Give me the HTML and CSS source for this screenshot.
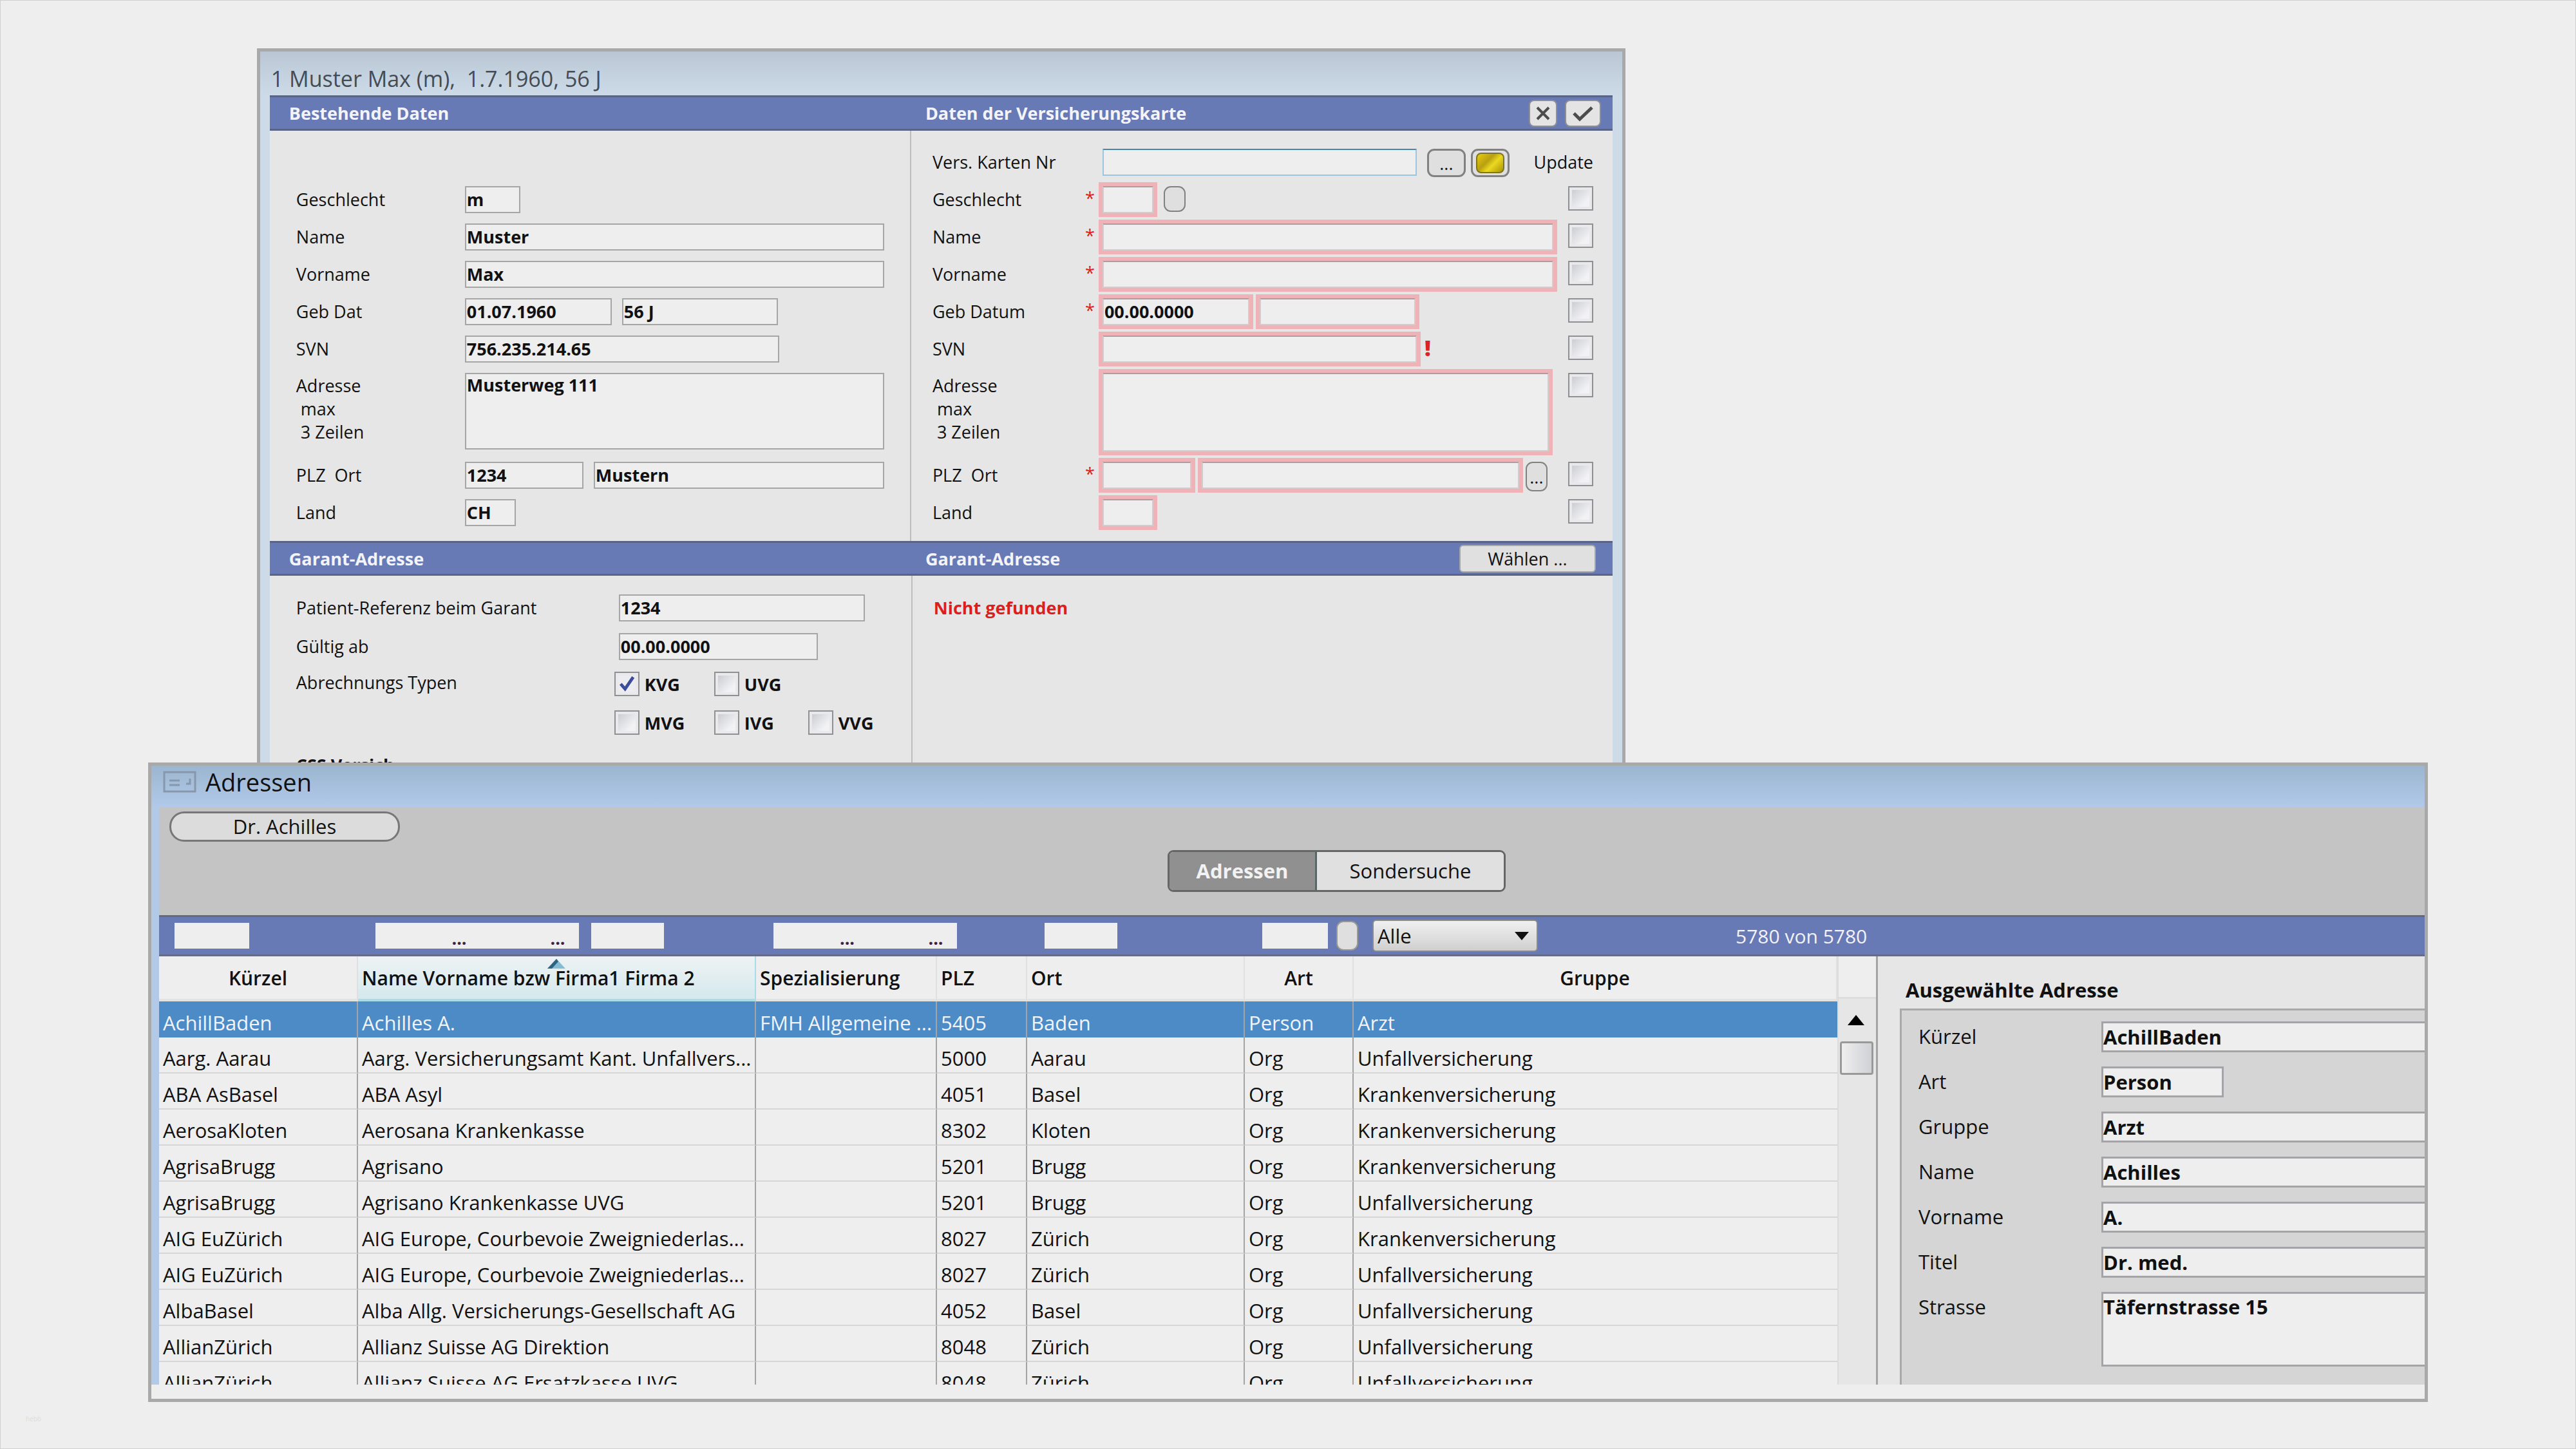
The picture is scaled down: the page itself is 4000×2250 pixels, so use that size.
FILE: index.html
```html
<!DOCTYPE html>
<html lang="de">
<head>
<meta charset="utf-8">
<title>Adressen</title>
<link rel="stylesheet" href="styles.css">
</head>
<body>
<main class="desktop">

<section class="window patient">
  <h1 class="patient-title">1 Muster Max (m),&nbsp; 1.7.1960, 56 J</h1>
  <div class="patient-body">
    <div class="bar bar-top">
      <h2>Bestehende Daten</h2>
      <div class="bar-right">
        <h2>Daten der Versicherungskarte</h2>
        <button class="icon-btn narrow" aria-label="Abbrechen"><svg viewBox="0 0 24 24"><path d="M3 3 L21 21 M21 3 L3 21"/></svg></button>
        <button class="icon-btn" aria-label="Übernehmen"><svg class="wide" viewBox="0 0 34 26"><path d="M3 13 L12 22 L31 4" /></svg></button>
      </div>
    </div>
    <div class="columns">
      <form class="panel left">
        <div class="row blank"></div>
        <div class="row"><label for="l1">Geschlecht</label><input id="l1" class="w86" value="m"></div>
        <div class="row"><label for="l2">Name</label><input id="l2" class="grow" value="Muster"></div>
        <div class="row"><label for="l3">Vorname</label><input id="l3" class="grow" value="Max"></div>
        <div class="row"><label for="l4">Geb Dat</label><input id="l4" class="w228" value="01.07.1960"><input class="w242" aria-label="Alter" value="56 J"></div>
        <div class="row"><label for="l5">SVN</label><input id="l5" class="w488" value="756.235.214.65"></div>
        <div class="row tall"><label for="l6">Adresse
 max
 3 Zeilen</label><textarea id="l6" class="grow">Musterweg 111</textarea></div>
        <div class="row"><label for="l7">PLZ&nbsp; Ort</label><input id="l7" class="w184" value="1234"><input class="grow" aria-label="Ort" value="Mustern"></div>
        <div class="row"><label for="l8">Land</label><input id="l8" class="w79" value="CH"></div>
      </form>
      <form class="panel right">
        <div class="row"><label for="r0">Vers. Karten Nr</label><i></i><input id="r0" class="w488 focus"><button type="button" class="mini">...</button><button type="button" class="mini" aria-label="Karte lesen"><span class="chip"></span></button><span class="end">Update</span></div>
        <div class="row req"><label for="r1">Geschlecht</label><i>*</i><input id="r1" class="w79"><button type="button" class="mini thin" aria-label="Auswahl"></button><input type="checkbox" class="end" aria-label="Update Geschlecht"></div>
        <div class="row req"><label for="r2">Name</label><i>*</i><input id="r2" class="w700"><input type="checkbox" class="end" aria-label="Update Name"></div>
        <div class="row req"><label for="r3">Vorname</label><i>*</i><input id="r3" class="w700"><input type="checkbox" class="end" aria-label="Update Vorname"></div>
        <div class="row req"><label for="r4">Geb Datum</label><i>*</i><input id="r4" class="w228" value="00.00.0000"><input class="w242" aria-label="Alter Karte"><input type="checkbox" class="end" aria-label="Update Geb Datum"></div>
        <div class="row req"><label for="r5">SVN</label><i></i><input id="r5" class="w488"><b class="bang">!</b><input type="checkbox" class="end" aria-label="Update SVN"></div>
        <div class="row req tall"><label for="r6">Adresse
 max
 3 Zeilen</label><i></i><textarea id="r6" class="w693"></textarea><input type="checkbox" class="end" aria-label="Update Adresse"></div>
        <div class="row req"><label for="r7">PLZ&nbsp; Ort</label><i>*</i><input id="r7" class="w138"><input class="w493" aria-label="Ort Karte"><button type="button" class="mini thin near">...</button><input type="checkbox" class="end" aria-label="Update Ort"></div>
        <div class="row req"><label for="r8">Land</label><i></i><input id="r8" class="w79"><input type="checkbox" class="end" aria-label="Update Land"></div>
      </form>
    </div>
    <div class="bar">
      <h2>Garant-Adresse</h2>
      <div class="bar-right">
        <h2>Garant-Adresse</h2>
        <button class="choose">Wählen ...</button>
      </div>
    </div>
    <div class="columns">
      <form class="panel left garant">
        <div class="row"><label for="g1">Patient-Referenz beim Garant</label><input id="g1" class="w382" value="1234"></div>
        <div class="row"><label for="g2">Gültig ab</label><input id="g2" class="w309" value="00.00.0000"></div>
        <div class="row"><span class="name">Abrechnungs Typen</span>
          <div class="types">
            <label><input type="checkbox" checked>KVG</label><label><input type="checkbox">UVG</label><span></span>
            <label><input type="checkbox">MVG</label><label><input type="checkbox">IVG</label><label><input type="checkbox">VVG</label>
          </div></div>
        <p class="more">CSS Versich.</p>
      </form>
      <div class="panel right garant"><p class="missing">Nicht gefunden</p></div>
    </div>
  </div>
</section>

<section class="window addresses">
  <header class="addr-title">
    <svg viewBox="0 0 52 34"><rect x="2" y="2" width="48" height="30" /><path d="M10 15 H26 M10 22 H26 M36 20 H42 V12"/></svg>
    <h1>Adressen</h1>
  </header>
  <div class="addr-body">
    <div class="toolbar">
      <button class="pill">Dr. Achilles</button>
      <div class="tabs"><button class="on">Adressen</button><button>Sondersuche</button></div>
    </div>
    <form class="filters">
      <div><input class="f116" aria-label="Kürzel"></div>
      <div><span class="combo f316"><input aria-label="Name"><button type="button">...</button><input aria-label="Vorname"><button type="button">...</button></span><input class="f113" aria-label="Firma"></div>
      <div><span class="combo f287"><input aria-label="Spezialisierung"><button type="button">...</button><input aria-label="Titel"><button type="button">...</button></span></div>
      <div></div>
      <div><input class="f113" aria-label="Ort"></div>
      <div class="art"><input class="f102" aria-label="Art"><button type="button" class="mini thin" aria-label="Art wählen"></button></div>
      <div class="last"><span class="select"><select aria-label="Gruppe"><option>Alle</option></select></span><output>5780 von 5780</output></div>
    </form>
    <div class="split">
      <table>
        <colgroup><col class="c1"><col class="c2"><col class="c3"><col class="c4"><col class="c5"><col class="c6"><col class="c7"></colgroup>
        <thead><tr><th class="mid">Kürzel</th><th class="sorted"><svg viewBox="0 0 28 15"><path d="M14 0 L28 15 H0 Z" fill="#86bcd2"/><path d="M14 0 L0 15 H7 L17 4 Z" fill="#2c6484"/></svg>Name Vorname bzw Firma1 Firma 2</th><th>Spezialisierung</th><th>PLZ</th><th>Ort</th><th class="mid">Art</th><th class="mid">Gruppe</th></tr></thead>
        <tbody>
        <tr class="sel"><td>AchillBaden</td><td>Achilles A.</td><td>FMH Allgemeine ...</td><td>5405</td><td>Baden</td><td>Person</td><td>Arzt</td></tr>
        <tr><td>Aarg. Aarau</td><td>Aarg. Versicherungsamt Kant. Unfallvers...</td><td></td><td>5000</td><td>Aarau</td><td>Org</td><td>Unfallversicherung</td></tr>
        <tr><td>ABA AsBasel</td><td>ABA Asyl</td><td></td><td>4051</td><td>Basel</td><td>Org</td><td>Krankenversicherung</td></tr>
        <tr><td>AerosaKloten</td><td>Aerosana Krankenkasse</td><td></td><td>8302</td><td>Kloten</td><td>Org</td><td>Krankenversicherung</td></tr>
        <tr><td>AgrisaBrugg</td><td>Agrisano</td><td></td><td>5201</td><td>Brugg</td><td>Org</td><td>Krankenversicherung</td></tr>
        <tr><td>AgrisaBrugg</td><td>Agrisano Krankenkasse UVG</td><td></td><td>5201</td><td>Brugg</td><td>Org</td><td>Unfallversicherung</td></tr>
        <tr><td>AIG EuZürich</td><td>AIG Europe, Courbevoie Zweigniederlas...</td><td></td><td>8027</td><td>Zürich</td><td>Org</td><td>Krankenversicherung</td></tr>
        <tr><td>AIG EuZürich</td><td>AIG Europe, Courbevoie Zweigniederlas...</td><td></td><td>8027</td><td>Zürich</td><td>Org</td><td>Unfallversicherung</td></tr>
        <tr><td>AlbaBasel</td><td>Alba Allg. Versicherungs-Gesellschaft AG</td><td></td><td>4052</td><td>Basel</td><td>Org</td><td>Unfallversicherung</td></tr>
        <tr><td>AllianZürich</td><td>Allianz Suisse AG Direktion</td><td></td><td>8048</td><td>Zürich</td><td>Org</td><td>Unfallversicherung</td></tr>
        <tr><td>AllianZürich</td><td>Allianz Suisse AG Ersatzkasse UVG</td><td></td><td>8048</td><td>Zürich</td><td>Org</td><td>Unfallversicherung</td></tr>
        </tbody>
      </table>
      <div class="scroll"><div class="corner"></div><svg viewBox="0 0 26 16"><path d="M13 0 L26 16 H0 Z"/></svg><div class="thumb"></div></div>
      <form class="detail">
        <h2>Ausgewählte Adresse</h2>
        <div class="card">
          <div class="line"><label for="d1">Kürzel</label><input id="d1" value="AchillBaden"></div>
          <div class="line"><label for="d2">Art</label><input id="d2" class="w190" value="Person"></div>
          <div class="line"><label for="d3">Gruppe</label><input id="d3" value="Arzt"></div>
          <div class="line"><label for="d4">Name</label><input id="d4" value="Achilles"></div>
          <div class="line"><label for="d5">Vorname</label><input id="d5" value="A."></div>
          <div class="line"><label for="d6">Titel</label><input id="d6" value="Dr. med."></div>
          <div class="line"><label for="d7">Strasse</label><textarea id="d7">Täfernstrasse 15</textarea></div>
        </div>
      </form>
    </div>
  </div>
</section>
<small class="mark">hebb</small>
</main>
</body>
</html>
```
FILE: styles.css
```css
* { box-sizing: border-box; }
body {
  margin: 0;
  background: #eee;
  color: #111;
  font-family: "Open Sans", "Noto Sans", sans-serif;
  font-size: 27px;
}
h1, h2, p { margin: 0; font-weight: 400; font-size: inherit; }
input, textarea, button, select {
  font: inherit;
  color: inherit;
  margin: 0;
  padding: 0;
  border-radius: 0;
  outline: 0;
}
button { line-height: 1; }
.desktop {
  position: relative;
  min-height: 100vh;
  overflow: hidden;
  box-shadow: inset 0 0 0 1px #d0d0d0;
}
.window {
  position: absolute;
  border: 5px solid #a9a9a9;
}
.mark { position: absolute; left: 1%; bottom: 40px; font-size: 10px; color: #dcdcdc; }

/* patient window */
.patient {
  top: 75px;
  left: 9.97%;
  width: 53.13%;
  background: linear-gradient(#bac6d4, #cddbe8 68px);
}
.patient-title {
  height: 68px;
  padding: 16px 0 0 17px;
  font-size: 34px;
  line-height: 52px;
  color: #444c55;
}
.patient-body { margin: 0 15px; background: #e6e6e6; }
.bar {
  display: grid;
  grid-template-columns: 996fr 1089fr;
  align-items: center;
  height: 54px;
  background: #687ab6;
  border-top: 3px solid #596486;
  border-bottom: 3px solid #596486;
  color: #f4f4f8;
}
.bar-top { height: 55px; }
.bar h2 { padding-left: 30px; font-weight: 700; }
.bar-right { display: flex; align-items: center; gap: 12px; padding-right: 18px; }
.bar-right h2 { flex: 1; padding-left: 22px; }
.icon-btn {
  display: grid;
  place-items: center;
  width: 56px;
  height: 42px;
  border: 2px solid #8c8f98;
  border-radius: 8px;
  background: #e4e4e4;
}
.icon-btn.narrow { width: 44px; }
.icon-btn svg { width: 24px; height: 24px; fill: none; stroke: #4c4c4c; stroke-width: 5; }
.icon-btn.narrow svg { stroke-width: 4; }
.icon-btn svg.wide { width: 34px; height: 26px; }
.choose {
  width: 212px;
  height: 43px;
  margin-right: 8px;
  border: 2px solid #a4a7ae;
  border-radius: 6px;
  background: #e0e0e0;
  color: #111;
}
.columns { display: grid; grid-template-columns: 996fr 1089fr; }
.panel { display: flex; flex-direction: column; gap: 16px; padding: 28px 0 23px; }
.left { padding-left: 41px; padding-right: 40px; border-right: 2px solid #bdbdbd; }
.right { padding-left: 33px; padding-right: 30px; }
.row { display: flex; height: 42px; gap: 16px; }
.row.tall { height: 122px; }
.row label, .row .name { line-height: 42px; white-space: pre; }
.left .row > label { width: 246px; }
.tall label { padding-top: 2px; line-height: 36px; }
.right .row > label { width: 221px; }
.right .row i { width: 11px; font-style: normal; font-size: 27px; line-height: 38px; color: #d22; }
.row input:not([type]), .row textarea {
  min-width: 0;
  border: 2px solid #a6a6a6;
  background: #eee;
  font-weight: 700;
  line-height: 34px;
  padding: 0 1px;
  resize: none;
}
.left .tall textarea { height: 119px; }
.left .row > .grow { flex: 1; }
.w79 { width: 79px; } .w86 { width: 86px; } .w138 { width: 138px; }
.w184 { width: 184px; } .w228 { width: 228px; } .w242 { width: 242px; }
.w309 { width: 309px; } .w382 { width: 382px; } .w488 { width: 488px; }
.w493 { width: 493px; } .w693 { width: 693px; } .w700 { width: 700px; }
.row input.focus {
  border-color: #4a86a8 #9cc6e0 #9cc6e0;
}
.req input:not([type]), .req textarea { box-shadow: 0 0 0 6px #efb2b6; }
.req input:not([type]), .req textarea { border-color: #a6a0a2 #d9c9cb #d9c9cb; }
.row .end { margin-left: auto; line-height: 42px; }
.bang { font-size: 34px; line-height: 38px; font-weight: 800; color: #d22; margin-left: -4px; }
input[type="checkbox"] {
  appearance: none;
  flex: none;
  width: 39px;
  height: 38px;
  border: 2px solid #8f9094;
  background: linear-gradient(135deg, #c4c6cc, #f2f2f4 70%);
  box-shadow: inset 0 0 0 4px #e9e9ec;
}
input[type="checkbox"]:checked {
  background: url("data:image/svg+xml,%3Csvg xmlns='http://www.w3.org/2000/svg' viewBox='0 0 36 34'%3E%3Cpath d='M8 17 L15 25 L28 6' fill='none' stroke='%233a4d9a' stroke-width='5'/%3E%3C/svg%3E") center / 100% 100% #ececf0;
}
.mini {
  display: grid;
  place-items: center;
  flex: none;
  width: 60px;
  height: 44px;
  border: 3px solid #818181;
  border-radius: 11px;
  background: #dfdfdf;
}
.mini + .mini { margin-left: -8px; }
.mini.thin { width: 34px; height: 40px; border-width: 2px; }
.mini.near { margin-left: -6px; height: 46px; }
.chip {
  width: 44px;
  height: 32px;
  border: 2px solid #7c7420;
  border-radius: 8px;
  background: linear-gradient(135deg, #e8cc10, #b8a010 40%, #ecd820 60%, #a89408);
}
.garant { padding-top: 29px; gap: 18px; min-height: 330px; }
.left.garant .row > label, .garant .name { flex: none; width: 485px; }
.left.garant .row > .name { line-height: 34px; }
.types {
  display: grid;
  flex: none;
  grid-template-columns: 155px 146px 120px;
  row-gap: 22px;
  height: 98px;
  margin-left: -7px;
}
.garant .types label { display: flex; gap: 8px; height: 38px; font-weight: 700; line-height: 40px; }
.more { margin-top: 67px; font-weight: 700; line-height: 36px; }
.missing { font-weight: 700; line-height: 42px; color: #dc1e1e; }

/* address list window */
.addresses {
  top: 1184px;
  left: 5.75%;
  width: 88.5%;
  padding-bottom: 22px;
  background: #eee;
  font-size: 31px;
}
.addr-title {
  display: flex;
  align-items: center;
  gap: 14px;
  height: 64px;
  padding: 0 0 14px 18px;
  background: linear-gradient(#9bb6d0, #b2c9e9);
}
.addr-title svg { width: 52px; height: 34px; fill: none; stroke: #8798ab; stroke-width: 3; }
.addr-title h1 { font-size: 38px; line-height: 50px; }
.addr-body { border-left: 12px solid #b2c9e8; }
.toolbar {
  display: grid;
  grid-template-columns: 1550px 525px;
  height: 168px;
  padding: 7px 0 0 16px;
  background: #c4c4c4;
}
.pill {
  width: 358px;
  height: 47px;
  border: 3px solid #777;
  border-radius: 23px;
  background: #dcdcdc;
}
.tabs { display: flex; height: 65px; margin-top: 60px; border: 3px solid #666; border-radius: 9px; background: #e0e0e0; overflow: hidden; }
.tabs button { flex: 1; border: 0; background: #e0e0e0; }
.tabs .on { flex: none; width: 229px; border-right: 3px solid #5a6668; background: #909090; color: #f2f2f2; font-weight: 700; }
.filters {
  display: grid;
  grid-template-columns: 308px 618px 281px 140px 338px 169px 1fr;
  height: 64px;
  background: #687ab6;
  border-top: 3px solid #666a78;
  border-bottom: 3px solid #666c88;
}
.filters > div { display: flex; align-items: center; gap: 19px; padding-left: 28px; }
.filters > div:first-child { padding-left: 24px; }
.filters input { height: 40px; min-width: 0; border: 0; background: #eee; }
.filters .art { gap: 13px; }
.f116 { width: 116px; } .f113 { width: 113px; } .f102 { flex: none; width: 102px; }
.f316 { width: 316px; } .f287 { flex: none; width: 285px; }
.combo { display: flex; height: 40px; padding-right: 10px; background: #eee; }
.combo input { flex: 1; }
.combo button { width: 46px; padding-top: 6px; border: 0; background: none; font-size: 27px; font-weight: 700; color: #402040; }
.filters .mini.thin { width: 34px; height: 46px; border-color: #9a9890; }
.filters .last { padding-left: 30px; }
.select { position: relative; }
.select::after {
  content: "";
  position: absolute;
  right: 14px;
  top: 19px;
  border: 11px solid transparent;
  border-top: 13px solid #111;
  border-bottom: 0;
}
select {
  display: block;
  appearance: none;
  width: 257px;
  height: 50px;
  padding-left: 6px;
  border: 2px solid #8a8a8a;
  border-radius: 6px;
  background: linear-gradient(#f0f0f0, #ddd 60%, #cfcfcf);
}
.filters output { margin-left: 288px; font-size: 30px; color: #f2f2f6; }
.split { display: flex; height: 665px; overflow: hidden; }
table { width: 2606px; flex: none; table-layout: fixed; border-collapse: separate; border-spacing: 0; align-self: flex-start; }
.c1 { width: 309px; } .c2 { width: 618px; } .c3 { width: 281px; } .c4 { width: 140px; }
.c5 { width: 338px; } .c6 { width: 169px; } .c7 { width: 751px; }
th {
  position: relative;
  height: 70px;
  padding: 2px 6px 0;
  border-right: 2px solid #e0e0e0;
  border-bottom: 4px solid #e2e2e0;
  text-align: left;
  font-size: 30px;
  font-weight: 600;
  line-height: 42px;
  white-space: nowrap;
}
th.mid { text-align: center; }
.sorted { border-color: #a9dbe8; background: linear-gradient(#eef2f3, #d5e9ee); }
.sorted svg { position: absolute; left: 294px; top: 4px; width: 28px; height: 15px; }
td {
  height: 56px;
  padding: 10px 0 0 6px;
  border-right: 2px solid #a4a4a4;
  border-bottom: 2px solid #d6d6d6;
  line-height: 42px;
  white-space: nowrap;
  overflow: hidden;
}
td:last-child { border-right: 0; }
.sel td { border-bottom: 0; background: #4c8bc6; color: #f0f4fa; }
.scroll { width: 60px; flex: none; border-left: 2px solid #dcdcdc; background: #e6e6e6; }
.corner { height: 66px; background: #eee; border-bottom: 3px solid #ddd; }
.scroll svg { display: block; width: 26px; height: 16px; margin: 25px 0 25px 14px; }
.thumb { width: 52px; height: 52px; margin-left: 2px; border: 3px solid #999; border-radius: 4px; background: linear-gradient(90deg, #eee, #d0d1d6); }
.detail { flex: 1; min-width: 0; padding: 28px 0 0 34px; border-left: 3px solid #a4a4a4; background: #e6e6e6; }
.detail h2 { height: 53px; padding-left: 9px; font-weight: 700; line-height: 48px; }
.card {
  display: flex;
  flex-direction: column;
  gap: 22px;
  height: 600px;
  padding: 17px 0 0 26px;
  border-top: 3px solid #a9a9a9;
  border-left: 3px solid #a9a9a9;
  background: #d5d5d5;
}
.line { display: flex; min-height: 48px; }
.line label { flex: none; width: 284px; line-height: 46px; }
.line input, .line textarea {
  flex: 1;
  min-width: 0;
  height: 48px;
  border: 3px solid #a4a4a8;
  border-right: 0;
  background: #eee;
  font-weight: 700;
  line-height: 40px;
  resize: none;
}
.line .w190 { flex: none; width: 190px; border-right: 3px solid #a4a4a8; }
.line textarea { height: 116px; }
```
